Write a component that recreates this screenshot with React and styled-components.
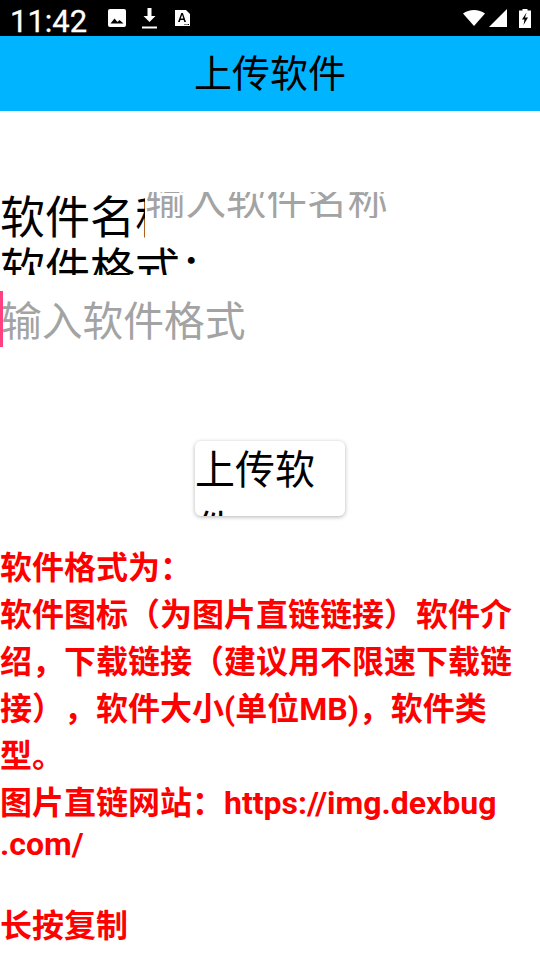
import React from "react";
import styled, { createGlobalStyle } from "styled-components";

const Global = createGlobalStyle`
  html, body { margin: 0; padding: 0; background: #fff; }
  body { font-family: Roboto, "Noto Sans CJK SC", sans-serif; text-spacing-trim: space-all; }
  * { box-sizing: border-box; }
`;
const Page = styled.div`
  width: 540px; height: 960px; overflow: hidden; display: flex; flex-direction: column; background: #fff;
`;
const StatusBar = styled.div`
  height: 36px; flex: none; background: #000; color: #fff; display: flex; align-items: flex-end; padding: 0 9px 0 10px;
`;
const Clock = styled.div`
  font: 400 31px/36px Roboto, sans-serif; width: 78px; height: 36px; padding-top: 4px; -webkit-text-stroke: 0.3px #fff;
`;
const Notices = styled.div`
  display: flex; align-items: center; gap: 16px; height: 36px; margin-left: 20px; flex: 1;
`;
const Tray = styled.div`
  display: flex; align-items: center; height: 36px; gap: 4px;
`;
const StatusIcon = styled.svg`
  flex: none; margin-left: ${p => p.$ml || 0}px;
`;
const AppBar = styled.header`
  height: 75px; flex: none; background: #00b4ff; display: flex; align-items: center; justify-content: center; padding-bottom: 5px;
  font: 400 38px/1 "Noto Sans CJK SC", sans-serif; color: #000;
`;
const Form = styled.main`
  display: flex; flex-direction: column; padding-top: 81px;
`;
const NameRow = styled.div`
  display: flex; height: 54px; align-items: flex-start;
`;
const NameLabel = styled.div`
  width: 145px; height: 54px; overflow: hidden; white-space: nowrap; font: 400 45px/46px "Noto Sans CJK SC", sans-serif; color: #000;
`;
const NameClip = styled.div`
  width: 250px; height: 26px; overflow: hidden; display: flex; align-items: flex-end; white-space: nowrap;
  font: 400 40.5px/1 "Noto Sans CJK SC", sans-serif; color: #a3a3a3;
`;
const FormatLabel = styled.div`
  height: 29px; overflow: hidden; white-space: nowrap; font: 400 45px/42px "Noto Sans CJK SC", sans-serif; color: #000;
`;
const InputBox = styled.div`
  position: relative; height: 56px; margin-top: 16px; white-space: nowrap;
  font: 400 40.75px/56px "Noto Sans CJK SC", sans-serif; color: #a3a3a3; padding-left: 1px;
`;
const Caret = styled.span`
  position: absolute; left: 0; top: 0; width: 3px; height: 56px; background: #ff4081;
`;
const ButtonRow = styled.div`
  display: flex; justify-content: center; margin-top: 94px;
`;
const UploadButton = styled.button`
  width: 150px; height: 75px; border: 0; border-radius: 6px; background: #fff; padding: 0; overflow: hidden;
  box-shadow: 0 1px 4px rgba(0,0,0,.3); display: block;
`;
const ButtonText = styled.span`
  display: block; margin-top: -4px; font: 400 40px/60px "Noto Sans CJK SC", sans-serif; color: #000; text-align: left; word-break: break-all;
`;
const Notes = styled.section`
  margin-top: 29px; color: #f00; font: 700 32px/47px Roboto, "Noto Sans CJK SC", sans-serif; width: 520px; word-break: break-all;
`;
const NoteLine = styled.div`
  line-height: ${p => p.$h || 47}px;
`;
const Spacer = styled.div` height: ${p => p.$h}px; `;

export default function App() {
  return (
    <Page lang="zh-CN">
      <Global />
      <StatusBar>
        <Clock>11:42</Clock>
        <Notices>
          <StatusIcon width="18" height="18" viewBox="0 0 18 18"><rect width="18" height="18" rx="2" fill="#fff"/><path d="M2.500 14.500l4-5 3 3.500 2-2 4 3.500z" fill="#000"/></StatusIcon>
          <StatusIcon width="15" height="21" viewBox="0 0 15 21"><path d="M5.500 0h4v8h4l-6 6-6-6h4z" fill="#fff"/><rect y="18.500" width="15" height="2" fill="#fff"/></StatusIcon>
          <StatusIcon $ml={2} width="15" height="16" viewBox="0 0 15 16"><path d="M0 0h11l4 4v12H0z" fill="#fff"/><path d="M3 12l3.300-9h1.600l3.100 9H9.300l-.6-2H5.400l-.6 2zM5.800 8.600h2.500L7.100 4.800z" fill="#000"/><path d="M9.500 14h1v1h-1zM11.500 14h1v1h-1zM13 14h1v1h-1z" fill="#000"/></StatusIcon>
        </Notices>
        <Tray>
          <StatusIcon width="22" height="16" viewBox="0 0 22 16"><path d="M0 3.500C3 1.200 7 0 11 0s8 1.200 11 3.500L11 16z" fill="#fff"/></StatusIcon>
          <StatusIcon width="18" height="18" viewBox="0 0 18 18"><path d="M0 18L18 0v18z" fill="#fff"/></StatusIcon>
          <StatusIcon $ml={8} width="12" height="19" viewBox="0 0 12 19"><path d="M3.500 0h5v1.500H12V19H0V1.500h3.500z" fill="#fff"/><path d="M7.500 3.500L3 10.500h2.500l-1 5.500 4.500-7.500H6z" fill="#000"/></StatusIcon>
        </Tray>
      </StatusBar>
      <AppBar>上传软件</AppBar>
      <Form>
        <NameRow>
          <NameLabel>软件名称：</NameLabel>
          <NameClip>输入软件名称</NameClip>
        </NameRow>
        <FormatLabel>软件格式：</FormatLabel>
        <InputBox><Caret />输入软件格式</InputBox>
        <ButtonRow><UploadButton><ButtonText>上传软件</ButtonText></UploadButton></ButtonRow>
        <Notes>
          <NoteLine>软件格式为：</NoteLine>
          <NoteLine>软件图标（为图片直链链接）软件介绍，下载链接（建议用不限速下载链接），软件大小(单位MB)，软件类型。</NoteLine>
          <NoteLine>图片直链网站：https://img.dexbug</NoteLine>
          <NoteLine $h={35}>.com/</NoteLine>
          <Spacer $h={41} />
          <NoteLine>长按复制</NoteLine>
        </Notes>
      </Form>
    </Page>
  );
}
